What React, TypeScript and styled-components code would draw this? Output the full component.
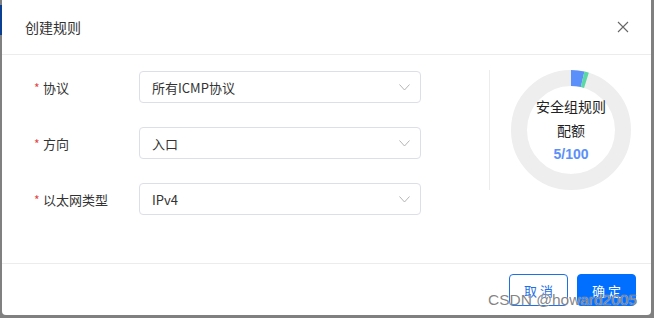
import styled, { createGlobalStyle } from "styled-components";

// ── Styles ────────────────────────────────────────────────────────────────────

const Global = createGlobalStyle`
  html, body { margin: 0; padding: 0; background: #808080; }
  body { font-family: "Noto Sans CJK SC", "Liberation Sans", sans-serif; }
  * { box-sizing: border-box; }
`;

const Backdrop = styled.div`
  width: 654px;
  height: 318px;
  display: flex;
  overflow: hidden;
  background: #808080;
`;

const LeftGutter = styled.div`
  width: 2px;
  flex-shrink: 0;
  display: flex;
  flex-direction: column;
  padding-top: 5px;
`;

const GutterBlue = styled.div`
  height: 30px;
  background: #0b3f91;
`;

const Dialog = styled.div`
  position: relative;
  width: 649px;
  height: 315px;
  flex-shrink: 0;
  display: flex;
  flex-direction: column;
  background: #fff;
  border-radius: 0 0 4px 4px;
`;

const Header = styled.div`
  height: 55px;
  flex-shrink: 0;
  padding: 0 22px 0 23px;
  display: flex;
  align-items: center;
  border-bottom: 1px solid #ececec;
`;

const Title = styled.span`
  flex: 1;
  font-size: 14px;
  color: #333;
`;

const CloseBtn = styled.button`
  width: 12px;
  height: 12px;
  padding: 0;
  border: none;
  background: none;
  display: flex;
  cursor: pointer;
`;

const Body = styled.div`
  height: 209px;
  flex-shrink: 0;
  display: flex;
  border-bottom: 1px solid #ececec;
`;

const Form = styled.div`
  width: 420px;
  flex-shrink: 0;
  padding: 16px 0 0 32px;
  display: flex;
  flex-direction: column;
  gap: 24px;
`;

const Row = styled.div`
  height: 32px;
  display: flex;
  align-items: center;
`;

const Label = styled.div`
  width: 105px;
  font-size: 13px;
  color: #333;
  display: flex;
  align-items: center;
`;

const Star = styled.span`
  color: #e54545;
  width: 9px;
  font-size: 12px;
`;

const Select = styled.div`
  width: 282px;
  height: 32px;
  border: 1px solid #dcdfe6;
  border-radius: 4px;
  padding: 0 10px 0 12px;
  display: flex;
  align-items: center;
  font-size: 13px;
  color: #333;
`;

const SelectText = styled.span`
  flex: 1;
`;

const Divider = styled.div`
  width: 1px;
  height: 120px;
  flex-shrink: 0;
  margin: 15px 0 0 67px;
  background: #ececec;
`;

const Quota = styled.div`
  position: relative;
  width: 120px;
  height: 120px;
  flex-shrink: 0;
  margin: 15px 0 0 21px;
`;

const QuotaText = styled.div`
  position: absolute;
  inset: 0;
  display: flex;
  flex-direction: column;
  align-items: center;
  justify-content: center;
  gap: 4px;
  font-size: 14px;
  color: #222;
  line-height: 20px;
`;

const QuotaNum = styled.div`
  font-family: "Liberation Sans", sans-serif;
  font-weight: 700;
  font-size: 14px;
  color: #5b8ff9;
`;

const Footer = styled.div`
  flex: 1;
  padding: 10px 15px 0 0;
  display: flex;
  justify-content: flex-end;
  gap: 9px;
`;

const Button = styled.button<{ $primary?: boolean }>`
  width: 59px;
  height: 32px;
  border-radius: 4px;
  border: 1px solid ${({ $primary }) => ($primary ? "#006eff" : "#1f6fe5")};
  background: ${({ $primary }) => ($primary ? "#006eff" : "#fff")};
  color: ${({ $primary }) => ($primary ? "#fff" : "#1f6fe5")};
  font-family: "Noto Sans CJK SC", sans-serif;
  font-size: 13px;
  letter-spacing: 3px;
  padding: 0 0 0 3px;
`;

const Watermark = styled.div`
  position: absolute;
  left: 486px;
  top: 291px;
  font-family: "Liberation Sans", sans-serif;
  font-size: 15.5px;
  color: rgba(110, 110, 110, 0.85);
  text-shadow: 0 0 1px #fff;
  pointer-events: none;
`;

// ── Helpers ───────────────────────────────────────────────────────────────────

const Chevron = () => (
  <svg width="11" height="7" viewBox="0 0 11 7">
    <path d="M0.5 0.5 L5.5 6 L10.5 0.5" fill="none" stroke="#b5b5b5" strokeWidth="1" />
  </svg>
);

const R = 52;
const C = 2 * Math.PI * R;

function Donut() {
  const seg = (from: number, len: number, color: string) => (
    <circle
      cx="60"
      cy="60"
      r={R}
      fill="none"
      stroke={color}
      strokeWidth="16"
      strokeDasharray={`${len * C} ${C}`}
      strokeDashoffset={-from * C}
      transform="rotate(-90 60 60)"
    />
  );
  return (
    <svg width="120" height="120" viewBox="0 0 120 120">
      <circle cx="60" cy="60" r={R} fill="none" stroke="#eeeeee" strokeWidth="16" />
      {seg(0, 0.036, "#5b8ff9")}
      {seg(0.036, 0.012, "#5ad8a6")}
    </svg>
  );
}

const rows = [
  { label: "协议", value: "所有ICMP协议" },
  { label: "方向", value: "入口" },
  { label: "以太网类型", value: "IPv4" },
];

// ── Component ─────────────────────────────────────────────────────────────────

export default function App() {
  return (
    <>
      <Global />
      <Backdrop>
        <LeftGutter>
          <GutterBlue />
        </LeftGutter>
        <Dialog>
          <Header>
            <Title>创建规则</Title>
            <CloseBtn aria-label="关闭">
              <svg width="12" height="12" viewBox="0 0 12 12">
                <path d="M1 1 L11 11 M11 1 L1 11" stroke="#666" strokeWidth="1.1" />
              </svg>
            </CloseBtn>
          </Header>

          <Body>
            <Form>
              {rows.map((r) => (
                <Row key={r.label}>
                  <Label>
                    <Star>*</Star>
                    {r.label}
                  </Label>
                  <Select>
                    <SelectText>{r.value}</SelectText>
                    <Chevron />
                  </Select>
                </Row>
              ))}
            </Form>
            <Divider />
            <Quota>
              <Donut />
              <QuotaText>
                <div>安全组规则</div>
                <div>配额</div>
                <QuotaNum>5/100</QuotaNum>
              </QuotaText>
            </Quota>
          </Body>

          <Footer>
            <Button>取消</Button>
            <Button $primary>确定</Button>
          </Footer>

          <Watermark>CSDN @howard2005</Watermark>
        </Dialog>
      </Backdrop>
    </>
  );
}
